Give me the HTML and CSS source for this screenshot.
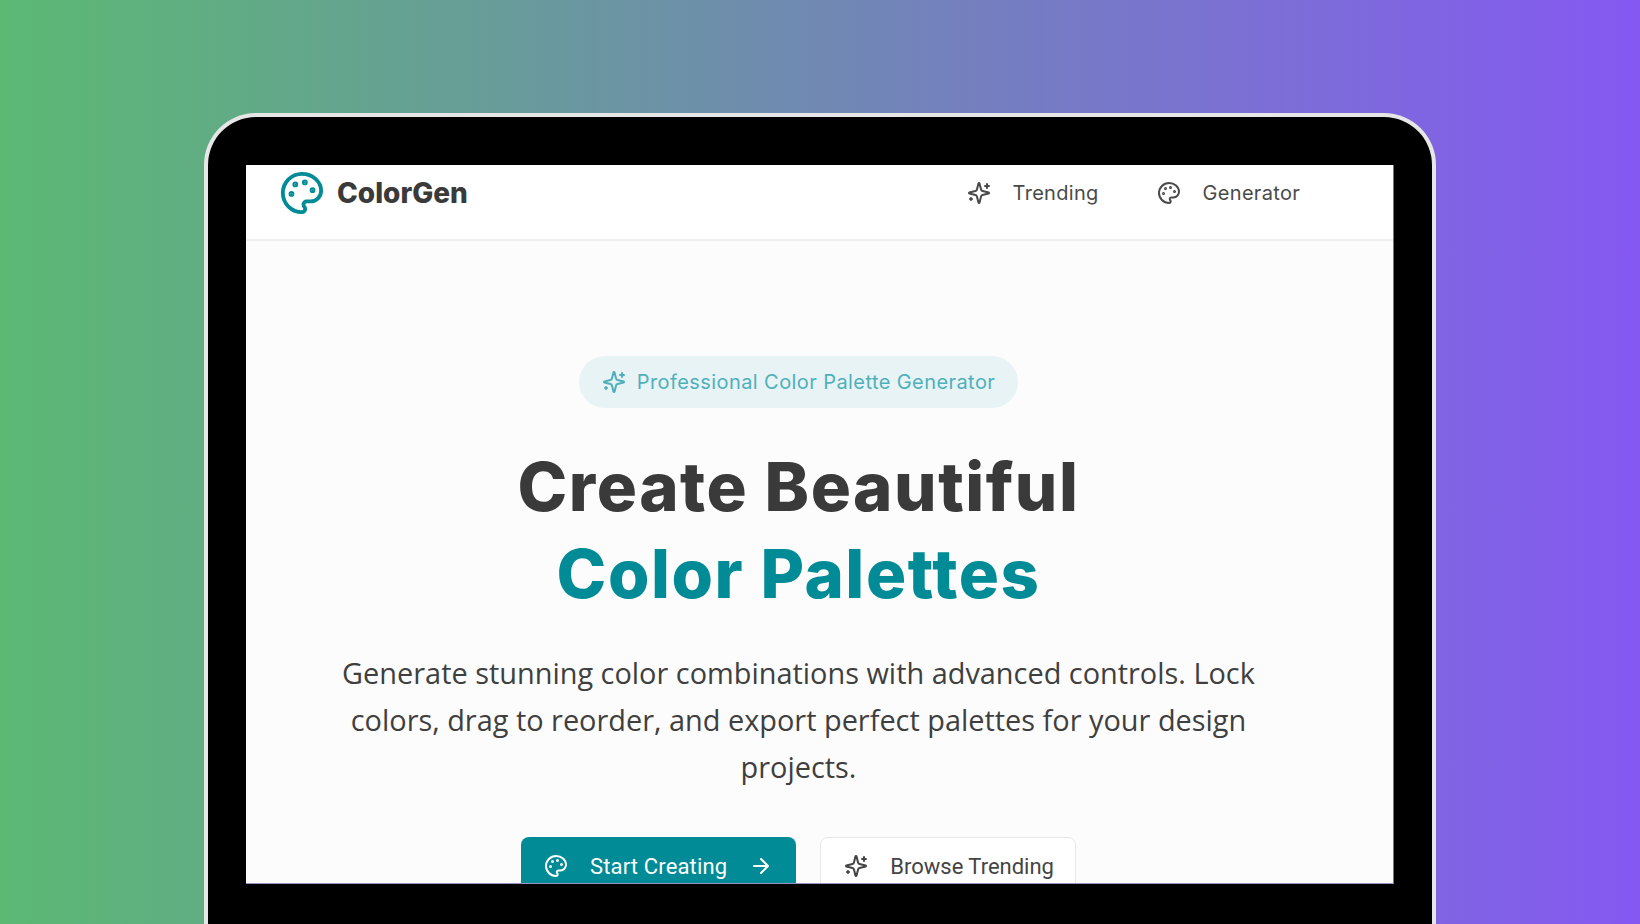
FILE: index.html
```html
<!DOCTYPE html>
<html lang="en">
<head>
  <meta charset="UTF-8">
  <title>ColorGen</title>
  <link rel="stylesheet" href="styles.css">
</head>
<body>
  <svg class="icon-defs" aria-hidden="true">
    <symbol id="palette" viewBox="0 0 24 24">
      <circle cx="13.5" cy="6.5" r=".5" fill="currentColor"/>
      <circle cx="17.5" cy="10.5" r=".5" fill="currentColor"/>
      <circle cx="8.5" cy="7.5" r=".5" fill="currentColor"/>
      <circle cx="6.5" cy="12.5" r=".5" fill="currentColor"/>
      <path d="M12 2C6.5 2 2 6.5 2 12s4.5 10 10 10c.926 0 1.648-.746 1.648-1.688 0-.437-.18-.835-.437-1.125-.29-.289-.438-.652-.438-1.125a1.64 1.64 0 0 1 1.668-1.668h1.996c3.051 0 5.555-2.503 5.555-5.554C21.965 6.012 17.461 2 12 2z"/>
    </symbol>
    <symbol id="sparkles" viewBox="0 0 24 24">
      <path d="M9.937 15.5A2 2 0 0 0 8.5 14.063l-6.135-1.582a.5.5 0 0 1 0-.962L8.5 9.936A2 2 0 0 0 9.937 8.5l1.582-6.135a.5.5 0 0 1 .963 0L14.063 8.5A2 2 0 0 0 15.5 9.937l6.135 1.581a.5.5 0 0 1 0 .964L15.5 14.063a2 2 0 0 0-1.437 1.437l-1.582 6.135a.5.5 0 0 1-.963 0z"/>
      <path d="M20 3v4M22 5h-4M4 17v2M5 18H3"/>
    </symbol>
    <symbol id="arrow" viewBox="0 0 24 24">
      <path d="M5 12h14M12 5l7 7-7 7"/>
    </symbol>
  </svg>

  <div class="device">
    <div class="screen">
      <header class="topbar">
        <a class="logo">
          <svg class="icon logo-icon"><use href="#palette"/></svg>
          <span>ColorGen</span>
        </a>
        <nav class="nav">
          <a class="nav-link"><svg class="icon"><use href="#sparkles"/></svg>Trending</a>
          <a class="nav-link"><svg class="icon"><use href="#palette"/></svg>Generator</a>
        </nav>
      </header>

      <main class="hero">
        <div class="pill">
          <svg class="icon"><use href="#sparkles"/></svg>
          Professional Color Palette Generator
        </div>
        <h1>Create Beautiful<br><span class="accent">Color Palettes</span></h1>
        <p class="lead">Generate stunning color combinations with advanced controls. Lock colors, drag to reorder, and export perfect palettes for your design projects.</p>
        <div class="actions">
          <a class="btn btn-primary">
            <svg class="icon"><use href="#palette"/></svg>
            Start Creating
            <svg class="icon"><use href="#arrow"/></svg>
          </a>
          <a class="btn btn-outline">
            <svg class="icon"><use href="#sparkles"/></svg>
            Browse Trending
          </a>
        </div>
      </main>
    </div>
  </div>
</body>
</html>
```

FILE: styles.css
```css
html, body {
  height: 100%;
}
body {
  margin: 0;
  overflow: hidden;
  background: linear-gradient(90deg, #5bb973 0%, #8558f2 100%);
  font-family: Inter, "Open Sans", sans-serif;
  color: #3a3a3a;
}
.icon-defs {
  display: none;
}
.icon {
  width: 24px;
  height: 24px;
  flex: none;
  fill: none;
  stroke: currentColor;
  stroke-width: 2;
  stroke-linecap: round;
  stroke-linejoin: round;
}
.device {
  box-sizing: border-box;
  width: 1232px;
  height: 811px;
  margin: 113px 0 0 204px;
  padding: 48px 38px 0 38px;
  background: #000;
  border: 4px solid #e6e6e6;
  border-bottom: 0;
  border-radius: 52px 52px 0 0;
}
.screen {
  height: 718px;
  overflow: hidden;
  background: #fff;
  border-right: 1px solid #7a62d6;
  border-bottom: 1px solid #9a94c0;
}
.topbar {
  display: flex;
  justify-content: space-between;
  height: 76px;
  padding: 6px 93px 0 33px;
  box-sizing: border-box;
  background: #fff;
  border-bottom: 2px solid #f0f0f0;
}
.logo {
  display: flex;
  align-items: center;
  gap: 12px;
  height: 44px;
  font-size: 28px;
  font-weight: 800;
  color: #3a3a3a;
}
.logo-icon {
  width: 46px;
  height: 46px;
  color: #008b96;
}
.nav {
  display: flex;
  gap: 58px;
  height: 44px;
}
.nav-link {
  display: flex;
  align-items: center;
  gap: 22px;
  font-size: 20px;
  letter-spacing: .3px;
  color: #4a4a4a;
}
.hero {
  display: flex;
  flex-direction: column;
  align-items: center;
  padding: 115px 42px 0 0;
  background: #fcfcfc;
  text-align: center;
}
.pill {
  display: flex;
  align-items: center;
  gap: 11px;
  height: 52px;
  padding: 0 23px;
  box-sizing: border-box;
  border-radius: 26px;
  background: #e8f3f5;
  color: #4fb0bb;
  font-size: 20px;
  letter-spacing: .42px;
}
h1 {
  margin: 35px 0 0 0;
  font-size: 67px;
  font-weight: 800;
  line-height: 87px;
  letter-spacing: 1.55px;
  color: #3a3a3a;
}
.accent {
  color: #008b96;
}
.lead {
  width: 950px;
  margin: 32px 0 0 0;
  font-family: "Open Sans", sans-serif;
  font-size: 28.9px;
  line-height: 47px;
  color: #3f3f3f;
}
.actions {
  display: flex;
  gap: 24px;
  margin-top: 47px;
}
.btn {
  display: flex;
  align-items: center;
  gap: 22px;
  height: 58px;
  padding: 0 23px;
  box-sizing: border-box;
  border-radius: 8px;
  font-family: Roboto, sans-serif;
  font-size: 22px;
}
.btn-primary {
  background: #008b96;
  color: #fff;
  letter-spacing: .15px;
}
.btn-outline {
  padding-right: 21px;
  background: #fff;
  border: 1px solid #e8e8e8;
  color: #444;
}
```
